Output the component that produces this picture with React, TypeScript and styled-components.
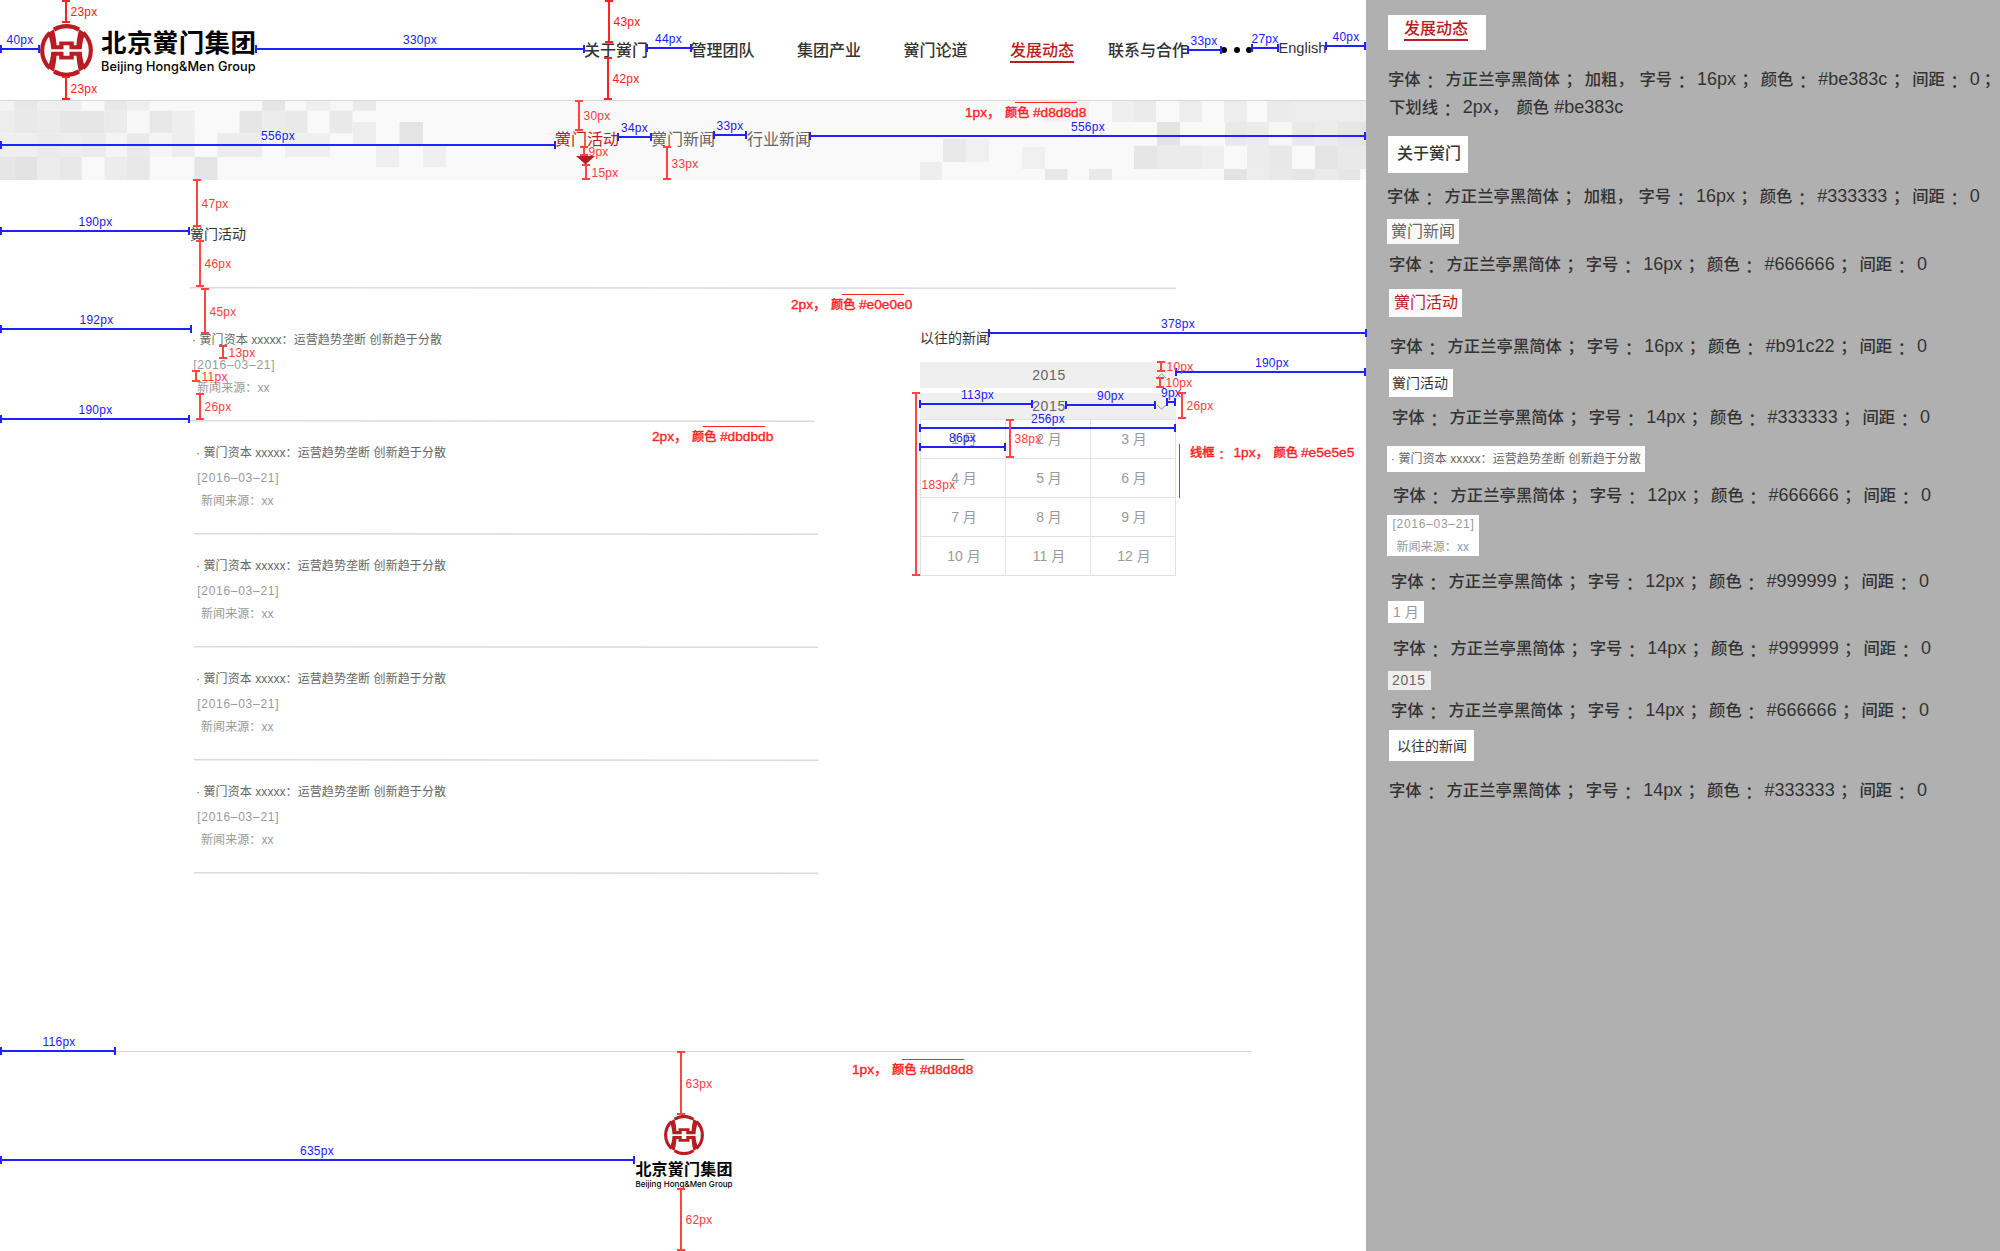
import React from "react";
import styled, { createGlobalStyle } from "styled-components";

const RED = "#b91c22";

const GlobalStyle = createGlobalStyle`
  *, *::before, *::after { box-sizing: border-box; }
  body {
    margin: 0;
    background: #fff;
    font-family: "Liberation Sans", "Noto Sans CJK SC", sans-serif;
    color: #333;
  }
`;

const Board = styled.div`
  position: relative;
  display: flex;
  width: 2000px;
  height: 1251px;
  overflow: hidden;
  white-space: nowrap;
`;

const Page = styled.div`
  display: flex;
  flex-direction: column;
  width: 1366px;
  background: #fff;
`;

/* ---------- logo ---------- */

const EmblemSvg = styled.svg<{ $size: number }>`
  display: block;
  flex: none;
  width: ${(p) => p.$size}px;
  height: ${(p) => p.$size}px;
`;

const HALF =
  "M-57 -52 L-38 -64 C-34 -48 -31 -32 -30 -16 L-22 -16 L-22 -27 L22 -27 L22 -16 L30 -16 C31 -32 34 -48 38 -64 L57 -52 C51 -38 47 -20 46 -3.5 L9 -3.5 L9 -16 L-9 -16 L-9 -3.5 L-46 -3.5 C-47 -20 -51 -38 -57 -52 Z";

const arc = (from: number, to: number, r = 73.5) => {
  const pt = (a: number) => {
    const t = (a * Math.PI) / 180;
    return `${(r * Math.sin(t)).toFixed(2)} ${(-r * Math.cos(t)).toFixed(2)}`;
  };
  return `M${pt(from)} A${r} ${r} 0 0 1 ${pt(to)}`;
};

const Emblem = ({ size }: { size: number }) => (
  <EmblemSvg $size={size} viewBox="-80 -80 160 160">
    <g fill="none" stroke={RED} strokeWidth="12.5">
      <path d={arc(-31, 31)} />
      <path d={arc(43, 137)} />
      <path d={arc(149, 211)} />
      <path d={arc(223, 317)} />
    </g>
    <path d={HALF} fill={RED} />
    <path d={HALF} fill={RED} transform="scale(1 -1)" />
  </EmblemSvg>
);

const LogoText = styled.div`
  display: flex;
  flex-direction: column;
`;

const NameCn = styled.div<{ $size: number; $pitch: number }>`
  font-family: "Noto Sans CJK SC", sans-serif;
  font-weight: 700;
  font-size: ${(p) => p.$size}px;
  letter-spacing: ${(p) => p.$pitch - p.$size}px;
  line-height: ${(p) => p.$pitch}px;
  color: #000;
`;

const NameEn = styled.div<{ $size: number; $track: number }>`
  font-family: Inter, sans-serif;
  font-weight: 500;
  font-size: ${(p) => p.$size}px;
  letter-spacing: ${(p) => p.$track}px;
  line-height: ${(p) => Math.round(p.$size * 1.3)}px;
  color: #000;
`;

/* ---------- header ---------- */

const Header = styled.header`
  display: flex;
  align-items: center;
  height: 101px;
  padding-left: 40px;
  border-bottom: 1px solid #d8d8d8;
`;

const Brand = styled.div`
  display: flex;
  align-items: center;
  gap: 8px;
  width: 215px;
  ${LogoText} { gap: 4.5px; padding-top: 2.5px; }
`;

const Nav = styled.nav`
  display: flex;
  gap: 42.5px;
  margin-left: 329px;
`;

const NavItem = styled.a<{ $active?: boolean }>`
  height: 24px;
  margin-top: 2px;
  font-size: 16px;
  font-weight: 500;
  line-height: 24px;
  color: ${(p) => (p.$active ? RED : "#333")};
  border-bottom: 2px solid ${(p) => (p.$active ? RED : "transparent")};
`;

const Contact = styled(NavItem)`
  margin-left: 34px;
`;

const Dots = styled.div`
  display: flex;
  gap: 6.7px;
  margin-left: 33px;
`;

const Dot = styled.i`
  width: 6px;
  height: 6px;
  border-radius: 50%;
  background: #000;
`;

const Lang = styled.a`
  margin: -5px 0 0 26px;
  font-size: 14.6px;
  line-height: 18px;
  color: #333;
`;

/* ---------- channel band ---------- */

const Band = styled.div`
  position: relative;
  height: 79px;
  background: #f9f9f9;
`;

const Mosaic = styled.svg`
  position: absolute;
  inset: 0;
  width: 1366px;
  height: 79px;
`;

const Channels = styled.div`
  position: relative;
  display: flex;
  gap: 32px;
  padding: 31px 0 0 555px;
`;

const Channel = styled.a<{ $active?: boolean }>`
  display: flex;
  flex-direction: column;
  gap: 8px;
  font-size: 16px;
  line-height: 16px;
  color: ${(p) => (p.$active ? RED : "#666")};
`;

const Pointer = styled.i`
  align-self: flex-start;
  width: 19px;
  height: 8.5px;
  margin-left: 21px;
  background: ${RED};
  clip-path: polygon(0 0, 100% 0, 50% 100%);
`;

type Tile = [number, number, number, number, string];

const row = (y: number, h: number, cells: [number, number, string][]): Tile[] =>
  cells.map(([a, b, c]) => [a, y, b - a, h, c]);

const TILES: Tile[] = [
  ...row(101, 9.7, [
    [0, 14.3, "#f3f3f3"], [14.3, 37, "#e8e8e8"], [37, 81.7, "#efefef"], [104.5, 127, "#e8e8e8"],
    [127, 149.7, "#efefef"], [262, 285, "#e6e6e6"], [306, 330, "#efefef"], [330, 353, "#f6f6f6"], [353, 376, "#ebebeb"],
  ]),
  ...row(110.7, 22.6, [
    [0, 14.3, "#ededed"], [14.3, 37, "#e9e9e9"], [37, 60, "#ebebeb"], [60, 104.5, "#e6e6e6"], [104.5, 127, "#ebebeb"],
    [127, 149.7, "#f8f8f8"], [149.7, 172, "#e8e8e8"], [172, 194.5, "#eeeeee"], [239.5, 262, "#e6e6e6"],
    [262, 285, "#ececec"], [285, 307.5, "#e9e9e9"], [329.5, 352.5, "#e9e9e9"],
  ]),
  ...row(133.3, 23.7, [
    [0, 37, "#efefef"], [37, 60, "#ebebeb"], [60, 81.7, "#ededed"], [81.7, 106, "#ebebeb"], [106, 127, "#f4f4f4"],
    [127, 149.7, "#e9e9e9"], [149.7, 172, "#f4f4f4"], [172, 194.5, "#ededed"], [217.5, 262, "#ececec"], [285, 330, "#efefef"],
  ]),
  ...row(157, 23, [
    [0, 14.3, "#e6e6e6"], [14.3, 37, "#e3e3e3"], [37, 60, "#ececec"], [60, 81.7, "#e8e8e8"],
    [104.5, 127, "#ececec"], [127, 149.7, "#e8e8e8"], [194.5, 217.5, "#e4e4e4"],
  ]),
  ...row(122, 22.5, [[353, 376, "#ededed"], [399.5, 423, "#e4e4e4"]]),
  ...row(144.5, 22.5, [[376, 399, "#efefef"], [423, 446, "#efefef"]]),
  ...row(101, 21, [
    [1044, 1089, "#f2f2f2"], [1112, 1134, "#efefef"], [1134, 1156, "#ebebeb"], [1179.5, 1202, "#ededed"],
    [1224, 1247, "#ededed"], [1267, 1292, "#ebebeb"], [1292, 1366, "#ededed"],
  ]),
  ...row(122, 23.7, [
    [1157, 1180, "#e4e4e4"], [1225, 1247, "#e9e9e9"], [1247, 1269, "#ececec"], [1269, 1292, "#f6f6f6"],
    [1292, 1315, "#e9e9e9"], [1315, 1338, "#ececec"], [1338, 1360, "#e6e6e6"], [1360, 1366, "#e4e4e4"],
  ]),
  ...row(145.7, 23.3, [
    [1134, 1157, "#e6e6e6"], [1157, 1202, "#ebebeb"], [1202, 1224, "#efefef"], [1247, 1269, "#ececec"],
    [1269, 1292, "#e8e8e8"], [1315, 1337, "#e4e4e4"], [1337, 1366, "#e9e9e9"],
  ]),
  ...row(169, 11, [
    [1045, 1067.5, "#e8e8e8"], [1089, 1112, "#e9e9e9"], [1224, 1247, "#e3e3e3"], [1247, 1269, "#ededed"],
    [1269, 1292, "#e9e9e9"], [1292, 1315, "#e6e6e6"], [1315, 1338, "#ebebeb"], [1338, 1360, "#e6e6e6"],
  ]),
  ...row(139, 23, [[943, 966, "#e9e9e9"], [966, 989, "#f0f0f0"]]),
  ...row(162, 18, [[920, 942, "#ededed"]]),
  ...row(147, 22, [[1022, 1045, "#f0f0f0"]]),
];

/* ---------- content ---------- */

const Main = styled.main`
  display: flex;
  flex-direction: column;
  height: 871px;
  padding: 46px 190px 0;
`;

const Heading = styled.h2`
  margin: 0;
  font-size: 14px;
  font-weight: 400;
  line-height: 16px;
  color: #333;
`;

const hairline = `
  background:
    linear-gradient(90deg, #d9d9d9, #eeeeee) 0 0 / 100% 1px no-repeat,
    linear-gradient(90deg, #eeeeee, #d9d9d9) 0 1px / 100% 1px no-repeat;
`;

const Rule = styled.div`
  flex: none;
  height: 2px;
  margin-top: 45px;
  ${hairline}
`;

const Columns = styled.div`
  display: flex;
  justify-content: space-between;
`;

const NewsList = styled.div`
  width: 628px;
  padding-top: 20px;
`;

const NewsItem = styled.article`
  display: flex;
  flex-direction: column;
  width: 624px;
  height: 113px;
  margin-left: 4px;
  padding: 23px 0 0 2px;
  &:first-child { margin-left: 0; }
  &::after {
    content: "";
    height: 2px;
    margin: auto 0 0 -2px;
    ${hairline}
  }
`;

const NewsTitle = styled.div`
  font-size: 12px;
  letter-spacing: 0.08px;
  line-height: 17px;
  color: #666;
`;

const NewsDate = styled.div`
  margin-top: 7.5px;
  padding-left: 1.2px;
  font-size: 12px;
  letter-spacing: 0.72px;
  line-height: 16px;
  color: #999;
`;

const NewsSource = styled.div`
  margin-top: 7px;
  padding-left: 5px;
  font-size: 12px;
  letter-spacing: 0.08px;
  line-height: 16px;
  color: #999;
`;

const Archive = styled.aside`
  display: flex;
  flex-direction: column;
  width: 256px;
  padding-top: 41px;
`;

const YearBar = styled.div<{ $gap: number }>`
  display: grid;
  grid-template-columns: 1fr auto 1fr;
  align-items: center;
  height: 26px;
  margin-top: ${(p) => p.$gap}px;
  padding: 0 9px 0 11px;
  background: #efefef;
`;

const Year = styled.span`
  grid-column: 2;
  font-size: 14px;
  letter-spacing: 0.6px;
  line-height: 16px;
  color: #666;
`;

const Chevron = styled.svg`
  justify-self: end;
  width: 11px;
  height: 6px;
  margin-top: 2px;
  fill: none;
  stroke: #999;
  stroke-width: 1;
`;

const Months = styled.div`
  display: grid;
  grid-template-columns: repeat(3, 84px);
  grid-auto-rows: 38px;
  gap: 1px;
  padding: 1px;
  background: #e2e2e2;
`;

const Month = styled.div`
  display: flex;
  align-items: center;
  justify-content: center;
  padding-left: 2px;
  background: #fff;
  font-size: 14px;
  line-height: 16px;
  color: #999;
`;

/* ---------- footer ---------- */

const Footer = styled.footer`
  display: flex;
  flex-direction: column;
  align-items: center;
  height: 200px;
  margin: 0 114px 0 116px;
  padding-top: 63px;
  border-top: 1px solid #d8d8d8;
  ${LogoText} { align-items: center; margin-top: 5px; gap: 3px; }
`;

/* ---------- spec panel ---------- */

const Panel = styled.aside`
  display: flex;
  flex-direction: column;
  align-items: flex-start;
  width: 634px;
  padding-top: 15px;
  background: #b0b0b0;
`;

const Swatch = styled.div<{
  $x: number; $gap?: number; $w: number; $h: number; $pad: number; $bg?: string; $lift?: number;
}>`
  display: flex;
  flex-direction: column;
  justify-content: center;
  align-items: flex-start;
  flex: none;
  width: ${(p) => p.$w}px;
  height: ${(p) => p.$h}px;
  margin: ${(p) => p.$gap ?? 0}px 0 0 ${(p) => p.$x}px;
  padding: 0 0 ${(p) => p.$lift ?? 0}px ${(p) => p.$pad}px;
  background: ${(p) => p.$bg ?? "#fff"};
  ${NavItem} { margin-top: 0; }
  ${NewsDate} { margin-top: 0; padding-left: 0.5px; }
  ${NewsSource} { padding-left: 4.5px; }
`;

const SpecRow = styled.div<{ $x: number; $gap: number }>`
  flex: none;
  height: 24px;
  margin: ${(p) => p.$gap}px 0 0 ${(p) => p.$x}px;
  font-size: 18px;
  line-height: 24px;
  color: #333;
`;

const Han = styled.span`
  font-size: 16.35px;
  font-weight: 500;
`;

const Mark = styled.span<{ $indent: number; $w: number; $drop?: number }>`
  display: inline-block;
  width: ${(p) => p.$w}px;
  padding-left: ${(p) => p.$indent}px;
  font-size: 16.35px;
  font-weight: 500;
  line-height: 16px;
  vertical-align: ${(p) => -(p.$drop ?? 0)}px;
`;

/* Splits a spec sentence into Han runs, Latin runs and fixed-advance punctuation. */
const Spec = ({ x, gap, text }: { x: number; gap: number; text: string }) => (
  <SpecRow $x={x} $gap={gap}>
    {(text.match(/[：；]|，|[\u4e00-\u9fff]+|[^：；，\u4e00-\u9fff]+/g) ?? []).map((t, i, all) => {
      if (/[：；]/.test(t)) {
        const last = i === all.length - 1;
        return <Mark key={i} $indent={last ? 4 : 5.6} $w={last ? 20.5 : 24.8} $drop={t === "：" ? 2 : 0}>{t}</Mark>;
      }
      if (t === "，") return <Mark key={i} $indent={0} $w={/下/.test(text) ? 24.6 : 22}>{t}</Mark>;
      if (/[\u4e00-\u9fff]/.test(t)) return <Han key={i}>{t}</Han>;
      return <span key={i}>{t}</span>;
    })}
  </SpecRow>
);

const spec = (size: number, color: string, bold = false) =>
  `字体：方正兰亭黑简体；${bold ? "加粗，" : ""}字号：${size}px；颜色：${color}；间距：0`;

/* ---------- measurement overlay ---------- */

const Overlay = styled.div`
  position: absolute;
  inset: 0;
  pointer-events: none;
`;

const BLUE = "#2222ff";

const HBar = styled.i<{ $x: number; $y: number; $w: number }>`
  position: absolute;
  left: ${(p) => p.$x}px;
  top: ${(p) => p.$y - 4}px;
  width: ${(p) => p.$w}px;
  height: 8px;
  border: solid ${BLUE};
  border-width: 0 2px;
  background: linear-gradient(${BLUE}, ${BLUE}) 0 3px / 100% 2px no-repeat;
`;

const VBar = styled.i<{ $x: number; $y: number; $h: number; $c: string }>`
  position: absolute;
  left: ${(p) => p.$x - 4}px;
  top: ${(p) => p.$y}px;
  width: 8px;
  height: ${(p) => p.$h}px;
  border: solid ${(p) => p.$c};
  border-width: 2px 0;
  background: linear-gradient(${(p) => p.$c}, ${(p) => p.$c}) 3px 0 / 2px 100% no-repeat;
`;

const Tag = styled.span<{ $x: number; $base: number; $c: string }>`
  position: absolute;
  left: ${(p) => p.$x - 0.5}px;
  top: ${(p) => p.$base - 10}px;
  font-size: 12px;
  letter-spacing: 0.25px;
  line-height: 12px;
  color: ${(p) => p.$c};
`;

const Stroke = styled.i<{ $x: number; $y: number; $w: number; $h: number }>`
  position: absolute;
  left: ${(p) => p.$x}px;
  top: ${(p) => p.$y}px;
  width: ${(p) => p.$w}px;
  height: ${(p) => p.$h}px;
  background: #ff2222;
`;

const Note = styled.div<{ $x: number; $base: number; $cols: string }>`
  position: absolute;
  display: grid;
  grid-template-columns: ${(p) => p.$cols};
  align-items: baseline;
  left: ${(p) => p.$x}px;
  top: ${(p) => p.$base - 12.5}px;
  font-size: 13.7px;
  line-height: 16px;
  color: #ff2222;
  -webkit-text-stroke: 0.35px #ff2222;
`;

const NoteHan = styled.span`
  font-size: 12.2px;
  font-weight: 500;
`;

const NoteColon = styled.span`
  padding-left: 4px;
  font-family: "Noto Sans CJK SC", sans-serif;
  font-size: 12px;
  line-height: 12px;
  transform: translateY(2px);
`;

/* x1, x2, y, label x, label baseline */
const H: [number, number, number, number, number, string][] = [
  [0, 40, 49, 7, 44, "40px"],
  [255, 585, 49, 403.5, 44, "330px"],
  [0, 556, 145, 261.5, 140, "556px"],
  [646, 692, 48, 655.5, 43, "44px"],
  [617, 652, 137, 621.5, 132, "34px"],
  [713, 747, 135, 717, 130, "33px"],
  [809, 1366, 136, 1071.5, 131, "556px"],
  [1187, 1222, 50, 1191, 45, "33px"],
  [1251, 1279, 48, 1252, 43, "27px"],
  [1325, 1366, 46, 1333, 41, "40px"],
  [0, 190, 231, 79, 226, "190px"],
  [0, 192, 329, 80, 324, "192px"],
  [0, 190, 419, 79, 414, "190px"],
  [988, 1367, 333, 1161.5, 328, "378px"],
  [1175, 1366, 372, 1255.5, 367, "190px"],
  [919, 1033, 404, 961.5, 399, "113px"],
  [1065, 1156, 405, 1097.5, 400, "90px"],
  [1166, 1176, 402, 1161.5, 397, "9px"],
  [919, 1176, 428, 1031.5, 423, "256px"],
  [919, 1006, 447, 949.5, 442, "86px"],
  [0, 116, 1051, 43, 1046, "116px"],
  [0, 635, 1160, 300.5, 1155, "635px"],
];

/* x, y1, y2, label x, label baseline */
const V: [number, number, number, number, number, string][] = [
  [66, 0, 23, 71, 16, "23px"],
  [66, 76, 100, 71, 93, "23px"],
  [609, 0, 43, 614, 26, "43px"],
  [608, 57, 100, 613, 83, "42px"],
  [579, 100, 131, 584, 120, "30px"],
  [584, 146, 156, 589, 156, "9px"],
  [586, 164, 180, 592, 177, "15px"],
  [667, 146, 180, 672, 168, "33px"],
  [197, 179, 227, 202, 208, "47px"],
  [200, 240, 287, 205, 268, "46px"],
  [205, 288, 334, 210, 316, "45px"],
  [223, 345, 359, 229, 357, "13px"],
  [196, 370, 382, 202, 381, "11px"],
  [200, 393, 420, 205, 411, "26px"],
  [1161, 361, 372, 1167, 371, "10px"],
  [1160, 377, 388, 1166, 387, "10px"],
  [916, 392, 576, 922, 489, "183px"],
  [1182, 392, 419, 1187, 410, "26px"],
  [1010, 419, 458, 1015, 443, "38px"],
  [681, 1051, 1115, 686, 1088, "63px"],
  [681, 1188, 1251, 686, 1224, "62px"],
];

const NOTES: [number, number, string, string][] = [
  [965, 117, "1px", "#d8d8d8"],
  [791, 309, "2px", "#e0e0e0"],
  [652, 441, "2px", "#dbdbdb"],
  [852, 1074, "1px", "#d8d8d8"],
];

const STROKES: [number, number, number, number][] = [
  [1015, 102, 62, 1],
  [842, 294, 62, 1],
  [703, 426, 62, 1],
  [902, 1059, 62, 1],
  [1179, 444, 1, 54],
];

const NEWS = "· 黉门资本 xxxxx：运营趋势垄断 创新趋于分散";
const DATE = "[2016–03–21]";
const SOURCE = "新闻来源：xx";

export default function App() {
  return (
    <Board>
      <GlobalStyle />
      <Page>
        <Header>
          <Brand>
            <Emblem size={53} />
            <LogoText>
              <NameCn $size={25.5} $pitch={25.9}>北京黉门集团</NameCn>
              <NameEn $size={12.7} $track={0.1}>Beijing Hong&amp;Men Group</NameEn>
            </LogoText>
          </Brand>
          <Nav>
            <NavItem>关于黉门</NavItem>
            <NavItem>管理团队</NavItem>
            <NavItem>集团产业</NavItem>
            <NavItem>黉门论道</NavItem>
            <NavItem $active>发展动态</NavItem>
          </Nav>
          <Contact>联系与合作</Contact>
          <Dots><Dot /><Dot /><Dot /></Dots>
          <Lang>English</Lang>
        </Header>

        <Band>
          <Mosaic viewBox="0 101 1366 79">
            {TILES.map(([x, y, w, h, c], i) => (
              <rect key={i} x={x} y={y} width={w} height={h} fill={c} />
            ))}
          </Mosaic>
          <Channels>
            <Channel $active>黉门活动<Pointer /></Channel>
            <Channel>黉门新闻</Channel>
            <Channel>行业新闻</Channel>
          </Channels>
        </Band>

        <Main>
          <Heading>黉门活动</Heading>
          <Rule />
          <Columns>
            <NewsList>
              {[0, 1, 2, 3, 4].map((n) => (
                <NewsItem key={n}>
                  <NewsTitle>{NEWS}</NewsTitle>
                  <NewsDate>{DATE}</NewsDate>
                  <NewsSource>{SOURCE}</NewsSource>
                </NewsItem>
              ))}
            </NewsList>
            <Archive>
              <Heading>以往的新闻</Heading>
              <YearBar $gap={16}>
                <Year>2015</Year>
                <Chevron viewBox="0 0 11 6"><path d="M0.8 5.2 L5.5 0.8 L10.2 5.2" /></Chevron>
              </YearBar>
              <YearBar $gap={5}>
                <Year>2015</Year>
                <Chevron viewBox="0 0 11 6"><path d="M0.8 0.8 L5.5 5.2 L10.2 0.8" /></Chevron>
              </YearBar>
              <Months>
                {Array.from({ length: 12 }, (_, i) => (
                  <Month key={i}>{i + 1} 月</Month>
                ))}
              </Months>
            </Archive>
          </Columns>
        </Main>

        <Footer>
          <Emblem size={40} />
          <LogoText>
            <NameCn $size={16} $pitch={16.2}>北京黉门集团</NameCn>
            <NameEn $size={8} $track={0.05}>Beijing Hong&amp;Men Group</NameEn>
          </LogoText>
        </Footer>
      </Page>

      <Panel>
        <Swatch $x={22} $w={98} $h={35} $pad={16} $lift={7}><NavItem $active>发展动态</NavItem></Swatch>
        <Spec x={22} gap={17} text={spec(16, "#be383c", true) + "；"} />
        <Spec x={23} gap={4} text="下划线：2px，颜色 #be383c" />
        <Swatch $x={22} $gap={17} $w={80} $h={37} $pad={9} $lift={2}><NavItem>关于黉门</NavItem></Swatch>
        <Spec x={21} gap={11} text={spec(16, "#333333", true)} />
        <Swatch $x={21} $gap={11} $w={72} $h={25} $pad={4} $bg="#f9f9f9"><Channel>黉门新闻</Channel></Swatch>
        <Spec x={23} gap={8} text={spec(16, "#666666")} />
        <Swatch $x={23} $gap={13} $w={73} $h={28} $pad={5} $bg="#f9f9f9"><Channel $active>黉门活动</Channel></Swatch>
        <Spec x={24} gap={17} text={spec(16, "#b91c22")} />
        <Swatch $x={23} $gap={11} $w={64} $h={28} $pad={3}><Heading>黉门活动</Heading></Swatch>
        <Spec x={26} gap={8} text={spec(14, "#333333")} />
        <Swatch $x={21} $gap={17} $w={258} $h={26} $pad={4}><NewsTitle>{NEWS}</NewsTitle></Swatch>
        <Spec x={27} gap={11} text={spec(12, "#666666")} />
        <Swatch $x={21} $gap={8} $w={92} $h={41} $pad={5}>
          <NewsDate>{DATE}</NewsDate>
          <NewsSource>{SOURCE}</NewsSource>
        </Swatch>
        <Spec x={25} gap={13} text={spec(12, "#999999")} />
        <Swatch $x={22} $gap={8} $w={36} $h={22} $pad={3}><Month>1 月</Month></Swatch>
        <Spec x={27} gap={13} text={spec(14, "#999999")} />
        <Swatch $x={22} $gap={11} $w={43} $h={19} $pad={4} $lift={1} $bg="#efefef"><Year>2015</Year></Swatch>
        <Spec x={25} gap={8} text={spec(14, "#666666")} />
        <Swatch $x={23} $gap={8} $w={85} $h={31} $pad={8}><Heading>以往的新闻</Heading></Swatch>
        <Spec x={23} gap={17} text={spec(14, "#333333")} />
      </Panel>

      <Overlay>
        {H.map(([x1, x2, y, lx, base, label], i) => (
          <React.Fragment key={i}>
            <HBar $x={x1} $y={y} $w={x2 - x1} />
            <Tag $x={lx} $base={base} $c="#1a1aff">{label}</Tag>
          </React.Fragment>
        ))}
        {V.map(([x, y1, y2, lx, base, label], i) => (
          <React.Fragment key={i}>
            <VBar $x={x} $y={y1} $h={y2 - y1} $c={i < 4 ? "#ff2222" : "#ff4444"} />
            <Tag $x={lx} $base={base} $c={i < 4 ? "#ff1a1a" : "#ff3b3b"}>{label}</Tag>
          </React.Fragment>
        ))}
        {STROKES.map(([x, y, w, h], i) => (
          <Stroke key={i} $x={x} $y={y} $w={w} $h={h} />
        ))}
        {NOTES.map(([x, base, size, color], i) => (
          <Note key={i} $x={x} $base={base} $cols="40px 28px auto">
            <span>{size}，</span>
            <NoteHan>颜色</NoteHan>
            <span>{color}</span>
          </Note>
        ))}
        <Note $x={1190} $base={457.5} $cols="24.5px 19px 40px 27.5px auto">
          <NoteHan>线框</NoteHan>
          <NoteColon>：</NoteColon>
          <span>1px，</span>
          <NoteHan>颜色</NoteHan>
          <span>#e5e5e5</span>
        </Note>
      </Overlay>
    </Board>
  );
}
